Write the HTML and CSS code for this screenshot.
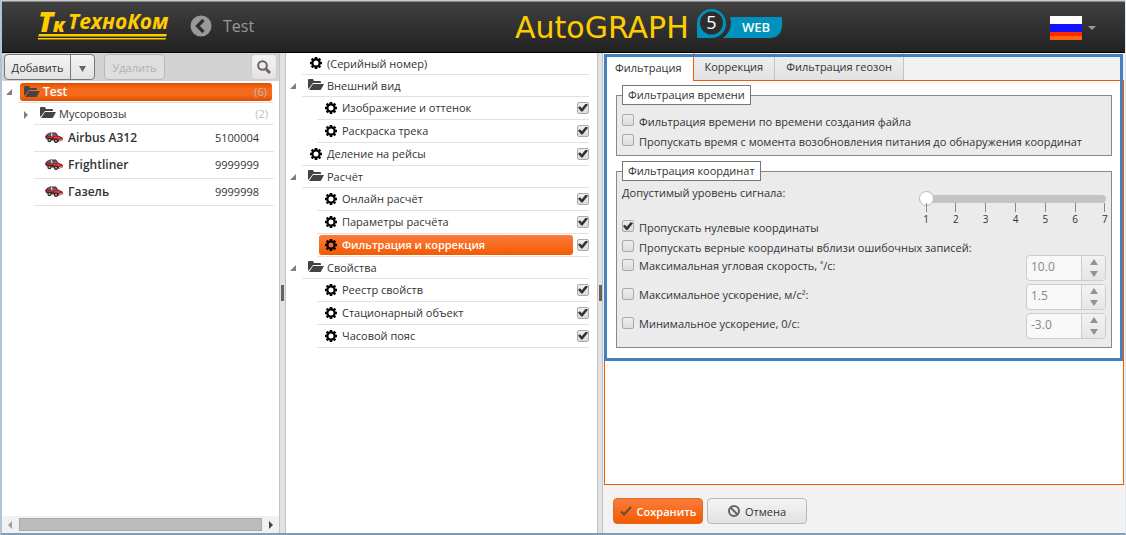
FILE: index.html
```html
<!DOCTYPE html>
<html lang="ru">
<head>
<meta charset="utf-8">
<title>AutoGRAPH 5 WEB</title>
<link rel="stylesheet" href="styles.css">
</head>
<body>
<svg class="defs" aria-hidden="true">
  <symbol id="folder" viewBox="0 0 16 12"><path d="M0 1q0-1 1-1h4l1 2h6q1 0 1 1v1H5L2 8 0 10z"/><path d="M5 5h11l-3 5.500q-.4.5-1 .5H1z"/></symbol>
  <symbol id="gear" viewBox="0 0 12 12"><circle cx="6" cy="6" r="3.600" fill="none" stroke="currentColor" stroke-width="2.200"/><g stroke="currentColor" stroke-width="2.600"><path d="M6 0v2M6 10v2M0 6h2M10 6h2M1.700 1.700l1.400 1.400M8.900 8.900l1.400 1.400M10.300 1.700L8.900 3.100M3.100 8.900l-1.400 1.400"/></g></symbol>
  <symbol id="car" viewBox="0 0 18 11"><path d="M0 4.500L2 2l3-1.600h6L13 3.400l4 1.800q1.200 1 .7 3l-4 1.600L1 7z" fill="#7c1c22"/><path d="M2 3.600L4 1.400l6.500.2 1.700 2.600-3.700.3z" fill="#59666a"/><path d="M6.500 1l.5 3.500" stroke="#e8e8e8"/><path d="M8 5l5-.6 3.500 1.500-2 1.400-5-.2z" fill="#e8343c"/><path d="M2 5l5 .6" stroke="#d8343c"/><circle cx="4.500" cy="8" r="2.200" fill="#2c2c2c"/><circle cx="11" cy="8.700" r="2.200" fill="#2c2c2c"/><circle cx="4.500" cy="8" r=".9" fill="#bbb"/><circle cx="11" cy="8.700" r=".9" fill="#bbb"/><path d="M14 8.500l3-.8" stroke="#ddd"/></symbol>
</svg>
<div class="app">
  <header class="topbar">
    <svg class="brand" viewBox="0 0 134 32" width="134" height="32" role="img" aria-label="ТехноКом">
      <g class="brand-ink">
        <text class="brand-t" x="1" y="22">T</text>
        <text class="brand-k" x="16" y="22">к</text>
        <text class="brand-name" x="31" y="19">ТехноКом</text>
        <path d="M2 24h128l-1 2.500H1zM1 28h128l-.5 1.500H1z"/>
      </g>
    </svg>
    <button class="back" aria-label="Назад"><svg viewBox="0 0 22 22" width="22" height="22"><circle cx="11" cy="11" r="10.500" fill="#999"/><path d="M13.500 5L7.500 11l6 6" fill="none" stroke="#2e2e2e" stroke-width="3.200"/></svg></button>
    <span class="crumb">Test</span>
    <svg class="product" viewBox="0 0 268 34" width="268" height="34" role="img" aria-label="AutoGRAPH 5 WEB">
      <text class="product-name" x="0" y="31">AutoGRAPH</text>
      <path d="M182 31V16a14.500 14.500 0 1 1 14.500 15z" fill="#0092bd"/>
      <circle cx="196.500" cy="16" r="11.500" fill="#2d2d2d"/>
      <text class="product-num" x="196.500" y="22">5</text>
      <path d="M215 10h52v9q-1 12-13 12h-46q8-6 8-16z" fill="#0092bd"/>
      <text class="product-web" x="241" y="25">WEB</text>
    </svg>
    <button class="lang" aria-label="Русский">
      <svg viewBox="0 0 32 24" width="32" height="24"><path fill="#fff" d="M0 0h32v8H0z"/><path fill="#1212ff" d="M0 8h32v8H0z"/><path fill="#ff2a00" d="M0 16h32v4H0z"/><path fill="#ff6510" d="M0 20h32v4H0z"/></svg>
      <svg viewBox="0 0 8 4" width="8" height="4"><path d="M0 0h8L4 4z" fill="#999"/></svg>
    </button>
  </header>

  <main class="panes">
    <section class="pane objects">
      <div class="toolbar">
        <div class="split"><button>Добавить</button><button class="drop" aria-label="Ещё"><svg viewBox="0 0 7 6" width="7" height="6"><path d="M0 0h7L3.500 6z" fill="#6b625c"/></svg></button></div>
        <button class="btn off" disabled>Удалить</button>
        <button class="btn search" aria-label="Поиск"><svg viewBox="0 0 14 14" width="14" height="14" fill="none" stroke="#6b625c"><circle cx="5.500" cy="5.500" r="4.300" stroke-width="2"/><path d="M9 9l4 4" stroke-width="3"/></svg></button>
      </div>
      <ul class="tree">
        <li class="row folder root"><i class="open"></i><span class="pill"><svg class="f"><use href="#folder"/></svg><b>Test</b><span class="count">(6)</span></span></li>
        <li class="row folder sub"><i class="closed"></i><svg class="f"><use href="#folder"/></svg><span>Мусоровозы</span><span class="count">(2)</span></li>
        <li class="row unit"><svg class="c"><use href="#car"/></svg><b>Airbus A312</b><span class="serial">5100004</span></li>
        <li class="row unit"><svg class="c"><use href="#car"/></svg><b>Frightliner</b><span class="serial">9999999</span></li>
        <li class="row unit"><svg class="c"><use href="#car"/></svg><b>Газель</b><span class="serial">9999998</span></li>
      </ul>
      <div class="hscroll"><svg viewBox="0 0 4 8" width="4" height="8"><path d="M4 0v8L0 4z" fill="#a0a0a0"/></svg><span class="bar"></span><svg viewBox="0 0 4 8" width="4" height="8"><path d="M0 0v8l4-4z" fill="#444"/></svg></div>
    </section>
    <div class="grip"></div>
    <section class="pane settings">
      <ul class="tree">
        <li class="row folder item"><svg class="g"><use href="#gear"/></svg><span>(Серийный номер)</span></li>
        <li class="row folder"><i class="open"></i><svg class="f"><use href="#folder"/></svg><span>Внешний вид</span></li>
        <li class="row item deep"><label for="s1"><svg class="g"><use href="#gear"/></svg>Изображение и оттенок</label><input type="checkbox" id="s1" checked></li>
        <li class="row item deep"><label for="s2"><svg class="g"><use href="#gear"/></svg>Раскраска трека</label><input type="checkbox" id="s2" checked></li>
        <li class="row item"><label for="s3"><svg class="g"><use href="#gear"/></svg>Деление на рейсы</label><input type="checkbox" id="s3" checked></li>
        <li class="row folder"><i class="open"></i><svg class="f"><use href="#folder"/></svg><span>Расчёт</span></li>
        <li class="row item deep"><label for="s4"><svg class="g"><use href="#gear"/></svg>Онлайн расчёт</label><input type="checkbox" id="s4" checked></li>
        <li class="row item deep"><label for="s5"><svg class="g"><use href="#gear"/></svg>Параметры расчёта</label><input type="checkbox" id="s5" checked></li>
        <li class="row item deep current"><label for="s6"><svg class="g"><use href="#gear"/></svg>Фильтрация и коррекция</label><input type="checkbox" id="s6" checked></li>
        <li class="row folder"><i class="open"></i><svg class="f"><use href="#folder"/></svg><span>Свойства</span></li>
        <li class="row item deep"><label for="s7"><svg class="g"><use href="#gear"/></svg>Реестр свойств</label><input type="checkbox" id="s7" checked></li>
        <li class="row item deep"><label for="s8"><svg class="g"><use href="#gear"/></svg>Стационарный объект</label><input type="checkbox" id="s8" checked></li>
        <li class="row item deep"><label for="s9"><svg class="g"><use href="#gear"/></svg>Часовой пояс</label><input type="checkbox" id="s9" checked></li>
      </ul>
    </section>
    <div class="grip"></div>
    <section class="editor">
      <div class="tabs" role="tablist">
        <button role="tab" class="tab active" aria-selected="true">Фильтрация</button>
        <button role="tab" class="tab">Коррекция</button>
        <button role="tab" class="tab">Фильтрация геозон</button>
      </div>
      <form class="sheet">
        <div class="groups">
        <fieldset>
          <legend>Фильтрация времени</legend>
          <div class="check"><input type="checkbox" id="t1"><label for="t1">Фильтрация времени по времени создания файла</label></div>
          <div class="check"><input type="checkbox" id="t2"><label for="t2">Пропускать время с момента возобновления питания до обнаружения координат</label></div>
        </fieldset>
        <fieldset class="coords">
          <legend>Фильтрация координат</legend>
          <div class="signal">
            <label for="level">Допустимый уровень сигнала:</label>
            <div class="scale">
              <input type="range" id="level" min="1" max="7" value="1">
              <div class="ticks"><span>1</span><span>2</span><span>3</span><span>4</span><span>5</span><span>6</span><span>7</span></div>
            </div>
          </div>
          <div class="check"><input type="checkbox" id="k1" checked><label for="k1">Пропускать нулевые координаты</label></div>
          <div class="check"><input type="checkbox" id="k2"><label for="k2">Пропускать верные координаты вблизи ошибочных записей:</label></div>
          <div class="limits">
            <div class="limit"><input type="checkbox" id="m1"><label for="m1">Максимальная угловая скорость, ˚/с:</label><div class="spin"><input type="text" value="10.0" aria-label="Угловая скорость" disabled><span class="arrows"><svg viewBox="0 0 8 18" width="8" height="18" fill="#999089"><path d="M4 0l4 6H0zM0 12h8l-4 6z"/></svg></span></div></div>
            <div class="limit"><input type="checkbox" id="m2"><label for="m2">Максимальное ускорение, м/с²:</label><div class="spin"><input type="text" value="1.5" aria-label="Максимальное ускорение" disabled><span class="arrows"><svg viewBox="0 0 8 18" width="8" height="18" fill="#999089"><path d="M4 0l4 6H0zM0 12h8l-4 6z"/></svg></span></div></div>
            <div class="limit"><input type="checkbox" id="m3"><label for="m3">Минимальное ускорение, 0/с:</label><div class="spin"><input type="text" value="-3.0" aria-label="Минимальное ускорение" disabled><span class="arrows"><svg viewBox="0 0 8 18" width="8" height="18" fill="#999089"><path d="M4 0l4 6H0zM0 12h8l-4 6z"/></svg></span></div></div>
          </div>
        </fieldset>
        </div>
      </form>
      <footer class="actions">
        <button class="btn save"><svg viewBox="0 0 12 10" width="12" height="10"><path d="M1 5.500l3 3L11 1" fill="none" stroke="#6b4a3a" stroke-width="2"/></svg>Сохранить</button>
        <button class="btn cancel"><svg viewBox="0 0 12 12" width="12" height="12" fill="none" stroke="#6b625c" stroke-width="2"><circle cx="6" cy="6" r="5"/><path d="M2.500 2.500l7 7"/></svg>Отмена</button>
      </footer>
      <div class="highlight"></div>
    </section>
  </main>
</div>
</body>
</html>
```

FILE: styles.css
```css
* { box-sizing: border-box; }
body {
  margin: 0;
  font: 11px/15px "Open Sans", "Noto Sans", sans-serif;
  color: #333;
  background: #7f9dbb;
}
button, input { font: inherit; color: inherit; margin: 0; }
.defs { position: absolute; width: 0; height: 0; }
.app {
  min-height: 100vh;
  display: flex;
  flex-direction: column;
  border-style: solid;
  border-color: #c8cccd #e3e8ee #7f9dbb #b3c3d3;
  border-width: 1px 1px 2px 2px;
}

.topbar {
  position: relative;
  display: flex;
  align-items: center;
  height: 52px;
  padding: 0 29px 2px 35px;
  border-top: 1px solid #8a8a8a;
  border-bottom: 1px solid #000;
  background: linear-gradient(#404040, #222);
}
.brand { overflow: visible; }
.brand-ink { fill: #fc0; }
.brand-t { font: italic 900 28px "Noto Sans"; }
.brand-k { font: italic 900 20px "Noto Sans"; }
.brand-name { font: italic 700 21px "Open Sans"; }
.back { margin-left: 19px; padding: 0; border: 0; background: none; display: flex; }
.crumb { margin-left: 11px; font-size: 16px; line-height: 22px; color: #999; }
.product { position: absolute; left: calc(50% - 49px); top: 5px; overflow: visible; }
.product-name { font: 30px "DejaVu Sans"; fill: #fc0; }
.product-num { font: 18px "Open Sans"; fill: #fff; text-anchor: middle; }
.product-web { font: 600 13px "Open Sans"; fill: #fff; text-anchor: middle; }
.lang { margin: 4px 0 0 auto; padding: 0; border: 0; background: none; display: flex; align-items: center; gap: 6px; }

.panes {
  flex: 1;
  display: grid;
  grid-template-columns: 277px 7px 311px 6px 1fr;
}
.pane { background: #fff; display: flex; flex-direction: column; }
.grip {
  background: #e2e2e2;
  border: solid #c3c3c3;
  border-width: 0 1px;
  display: flex;
  align-items: center;
  justify-content: center;
}
.grip::before { content: ""; width: 3px; height: 16px; background: #6b625c; }

.toolbar { display: flex; gap: 9px; height: 28px; padding: 1px 2px; background: #d3d3d3; }
.btn, .split {
  height: 26px;
  border: 1px solid #b8b8b8;
  border-radius: 4px;
  background: linear-gradient(#f4f4f4, #e2e2e2);
}
.split { display: flex; width: 91px; border-color: #777; }
.split button { flex: 1; padding: 0; border: 0; background: none; }
.split .drop { flex: 0 0 24px; border-left: 1px solid #777; }
.toolbar .off { width: 61px; padding: 0; color: #b0b0b0; background: #dedede; }
.toolbar .search { width: 26px; padding: 0; margin-left: auto; display: grid; place-content: center; border-color: #ccc; }

.tree { list-style: none; margin: 0; padding: 0; flex: 1; }
.row {
  display: flex;
  align-items: center;
  height: 23px;
  margin: 0 8px 0 31px;
  padding-bottom: 1px;
  border-bottom: 1px solid #e2e2e2;
}
.row.folder { height: 22px; margin-left: 16px; padding-left: 6px; position: relative; }
.row i { position: absolute; left: -12px; top: 8px; width: 6px; height: 6px; background: #857c76; }
.open { clip-path: polygon(100% 0, 100% 100%, 0 100%); }
.row .closed { width: 4px; height: 8px; left: -10px; clip-path: polygon(0 0, 100% 50%, 0 100%); }
.f { width: 16px; height: 12px; fill: #444; margin-right: 3px; flex: none; }
.g { width: 12px; height: 12px; color: #000; margin-right: 5px; flex: none; }
.c { width: 18px; height: 11px; margin-right: 5px; flex: none; }
.count { margin-left: auto; color: #bbb; }

.objects .row { margin-right: 5px; }
.objects .root { margin-left: 16px; padding: 0 2px; }
.pill {
  flex: 1;
  display: flex;
  align-items: center;
  height: 18px;
  padding: 0 5px 0 4px;
  border-radius: 3px;
  color: #fff;
  background: linear-gradient(#e04e00, #f66a1c 30%, #f66a1c 65%, #e04e00);
}
.objects .sub { margin-left: 32px; }
.sub .count { margin-right: 6px; }
.objects .unit { height: 27px; margin-left: 32px; padding-left: 11px; }
.serial { margin-left: auto; margin-right: 15px; }
b { font-size: 12px; font-weight: 600; }
.hscroll { display: flex; align-items: center; gap: 7px; height: 17px; padding: 0 6px; background: #f1f1f1; }
.bar { flex: 1; height: 13px; background: #bcbcbc; border: 1px solid #a8a8a8; }

.row.item { margin-left: 16px; padding-left: 8px; }
.row.deep { margin-left: 31px; padding-left: 2px; }
.row label { flex: 1; display: flex; align-items: center; height: 20px; border-radius: 3px; margin-right: 4px; padding-left: 6px; }
.row.item:not(.deep) label { padding-left: 0; }
.current label { color: #fff; font-weight: 600; background: linear-gradient(#fb7c3c, #f45a00); }

input[type="checkbox"] {
  appearance: none;
  flex: none;
  width: 12px;
  height: 12px;
  border: 1px solid #aaa;
  border-radius: 2px;
  background: linear-gradient(#eee, #dcdcdc);
  display: grid;
  place-content: center;
}
input[type="checkbox"]:checked::before {
  content: "";
  width: 10px;
  height: 8px;
  background: #333;
  clip-path: polygon(0 50%, 20% 35%, 38% 58%, 78% 0, 100% 15%, 45% 100%, 32% 100%);
}

.editor { position: relative; display: flex; flex-direction: column; background: #f2f2f2; padding: 0 1px; }
.tabs { display: flex; height: 28px; border-bottom: 1px solid #f45a00; }
.tab { padding: 0 11px; border: 0; border-right: 1px solid #c3c3c3; background: linear-gradient(#f0f0f0, #e2e2e2); }
.tab.active { border-right-color: #f45a00; background: #fff; margin-bottom: -1px; }
.sheet { flex: 1; background: #fff; border: 1px solid #f45a00; border-top: 0; }
.groups { display: flex; flex-direction: column; gap: 5px; padding: 4px 11px 13px; }
fieldset { margin: 0; padding: 4px 5px 6px; border: 1px solid #888; background: #ebebeb; min-width: 0; }
legend { height: 20px; padding: 1px 5px; border: 1px solid #777; background: #fff; line-height: 16px; }
.coords { padding-bottom: 8px; }
.check { display: flex; gap: 5px; padding-top: 5px; }
.signal { display: flex; justify-content: space-between; height: 30px; }
.scale { width: 187px; padding-top: 6px; }
.scale input { appearance: none; display: block; width: 100%; height: 16px; background: none; }
.scale input::-webkit-slider-runnable-track { height: 8px; border-radius: 4px; background: #c4c4c4; }
.scale input::-webkit-slider-thumb { appearance: none; width: 15px; height: 15px; margin-top: -4px; border: 1px solid #bbb; border-radius: 50%; background: #fff; }
.ticks { display: flex; justify-content: space-between; margin: -4px -6px 0 0; line-height: 14px; font-size: 10px; }
.ticks span { width: 14px; text-align: center; }
.ticks span::before { content: ""; display: block; width: 1px; height: 9px; margin: 0 auto; background: #888; }
.limits { display: flex; flex-direction: column; gap: 3px; }
.limit { display: flex; align-items: flex-start; gap: 5px; }
.limit > input { margin-top: 4px; }
.limit > label { margin-top: 3px; }
.spin { display: flex; width: 80px; height: 26px; margin-left: auto; border: 1px solid #ccc; border-radius: 4px; overflow: hidden; background: #f8f8f8; }
.spin input { width: 55px; border: 0; border-right: 1px solid #ccc; background: none; padding: 0 4px 3px; font-size: 12px; color: #888; }
.arrows { flex: 1; display: grid; place-content: center; background: linear-gradient(#f2f2f2, #e6e6e6); }

.actions { display: flex; gap: 4px; padding: 13px 9px 9px; }
.actions .btn { display: flex; align-items: center; justify-content: center; gap: 5px; padding: 0; }
.actions .save { width: 90px; font-weight: 600; color: #fff; border-color: #e2682a; background: linear-gradient(#fb7c3c, #f45a00); }
.actions .cancel { width: 100px; }
.highlight { position: absolute; inset: 1px 2px auto 1px; height: 307px; border: 3px solid #4380c0; pointer-events: none; }
```
